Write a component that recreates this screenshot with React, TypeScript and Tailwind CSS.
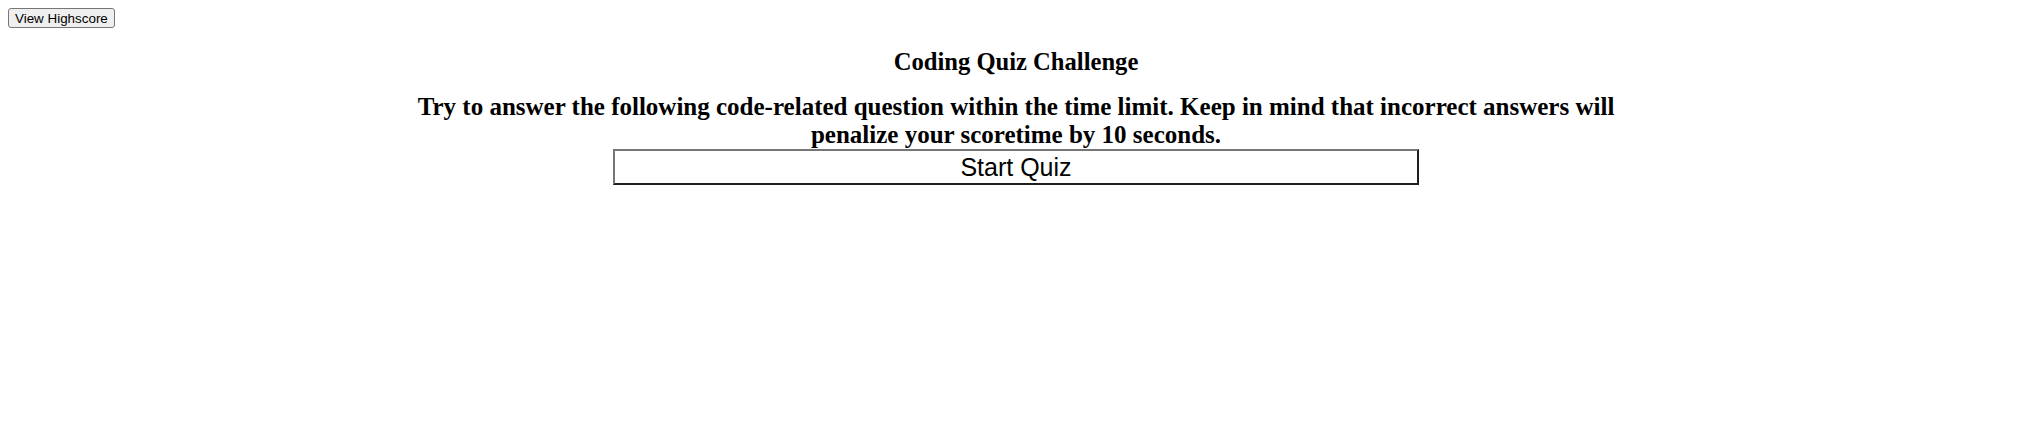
export default function App() {
  return (
    <div className="p-2 bg-white text-black font-['Liberation_Serif',serif] leading-[normal]">
      <button className="h-[20px] px-[6px] rounded-[3px] border border-[#767676] bg-[#efefef] text-[13.4px] leading-[normal] font-['Liberation_Sans',Arial,sans-serif]">
        View Highscore
      </button>

      <div className="flex flex-col items-center">
        <h2 className="mt-[20px] text-[24.6px] font-bold">Coding Quiz Challenge</h2>
        <p className="mt-[17px] w-[60%] text-center text-[25px] font-bold">
          Try to answer the following code-related question within the time limit. Keep in mind that incorrect answers will penalize your scoretime by 10 seconds.
        </p>
        <button className="w-[40%] h-[36px] bg-white border-2 border-t-[#767676] border-l-[#767676] border-b-[#1f1f1f] border-r-[#1f1f1f] text-[25px] leading-[normal] font-['Liberation_Sans',Arial,sans-serif]">
          Start Quiz
        </button>
      </div>
    </div>
  );
}
